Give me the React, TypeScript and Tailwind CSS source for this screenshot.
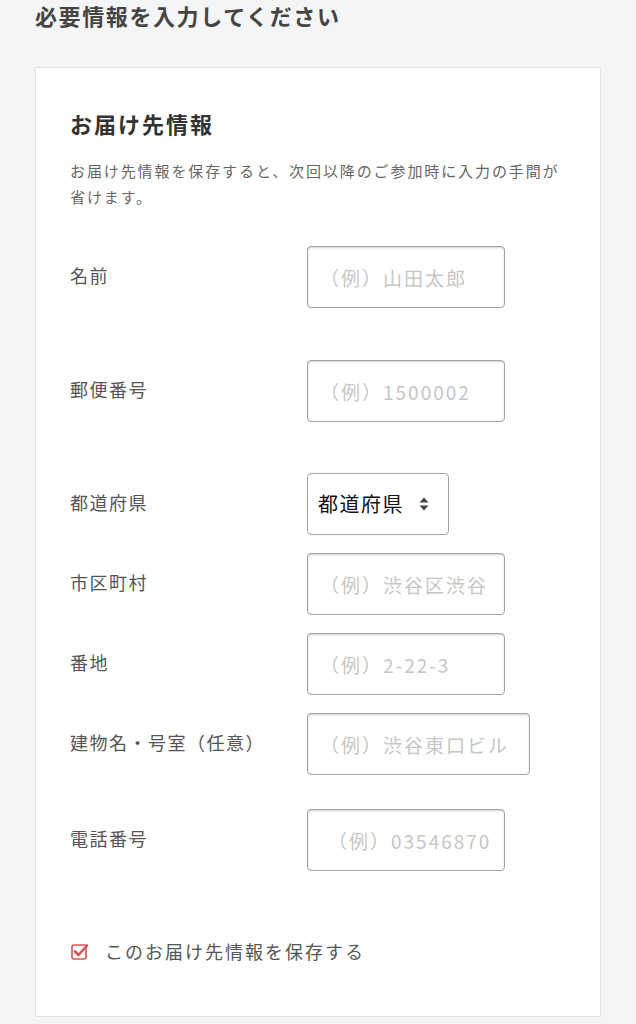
import React from "react";

const font = { fontFamily: '"Noto Sans CJK JP", "Noto Sans", sans-serif' };

type Field = {
  label: string;
  placeholder: string;
  width: string;
  gap: string;
  pad?: string;
};

const fields: Field[] = [
  { label: "名前", placeholder: "（例）山田太郎", width: "w-[198px]", gap: "mt-0" },
  { label: "郵便番号", placeholder: "（例）1500002", width: "w-[198px]", gap: "mt-[52px]" },
];

const fields2: Field[] = [
  { label: "市区町村", placeholder: "（例）渋谷区渋谷", width: "w-[198px]", gap: "mt-[18px]" },
  { label: "番地", placeholder: "（例）2-22-3", width: "w-[198px]", gap: "mt-[18px]" },
  { label: "建物名・号室（任意）", placeholder: "（例）渋谷東口ビル", width: "w-[223px]", gap: "mt-[18px]" },
  { label: "電話番号", placeholder: "（例）0354687000", width: "w-[198px]", gap: "mt-[34px]", pad: "pl-[20px]" },
];

const FieldRow: React.FC<{ field: Field }> = ({ field }) => (
  <div className={`flex items-center ${field.gap}`}>
    <label className="w-[237px] shrink-0 text-[18px] leading-[24px] tracking-[1.5px] text-[#555] -mt-[4px]">
      {field.label}
    </label>
    <input
      type="text"
      placeholder={field.placeholder}
      className={`h-[62px] ${field.width} rounded-[4px] border border-[#a3a3a3] bg-white ${field.pad ?? "pl-[12px]"} pr-[12px] text-[19px] tracking-[2px] text-[#333] placeholder:text-[#c6c6c6] shadow-[inset_0_1px_2px_rgba(0,0,0,0.18)] outline-none`}
      style={font}
    />
  </div>
);

export default function App() {
  return (
    <div className="min-h-[1024px] bg-[#f4f5f7] px-[35px]" style={font}>
      <h1 className="text-[22px] font-bold leading-[30px] tracking-[1.6px] text-[#444]">
        必要情報を入力してください
      </h1>

      <div className="mt-[37px] border border-[#e2e3e5] bg-white px-[34px] pt-[40px] pb-[53px]">
        <h2 className="text-[22px] font-bold leading-[30px] tracking-[2px] text-[#333]">
          お届け先情報
        </h2>
        <p className="mt-[20px] text-[15px] leading-[26px] tracking-[1.9px] text-[#666]">
          お届け先情報を保存すると、次回以降のご参加時に入力の手間が省けます。
        </p>

        <div className="mt-[36px] flex flex-col">
          {fields.map((f) => (
            <FieldRow key={f.label} field={f} />
          ))}

          {/* Prefecture select */}
          <div className="mt-[51px] flex items-center">
            <label className="w-[237px] shrink-0 text-[18px] leading-[24px] tracking-[1.5px] text-[#555] -mt-[4px]">
              都道府県
            </label>
            <div className="relative">
              <select
                className="h-[62px] w-[142px] appearance-none rounded-[4px] border border-[#a3a3a3] bg-white pl-[10px] text-[20px] tracking-[1.5px] text-[#111] outline-none"
                style={font}
                defaultValue=""
              >
                <option value="">都道府県</option>
                <option value="tokyo">東京都</option>
              </select>
              <svg
                className="pointer-events-none absolute left-[112px] top-[24px]"
                width="10"
                height="14"
                viewBox="0 0 10 14"
              >
                <path d="M5 0.5L9.5 5.5H0.5Z" fill="#444" />
                <path d="M5 13.5L9.5 8.5H0.5Z" fill="#444" />
              </svg>
            </div>
          </div>

          {fields2.map((f) => (
            <FieldRow key={f.label} field={f} />
          ))}
        </div>

        <label className="mt-[68px] flex items-center gap-[16px]">
          <svg width="18" height="18" viewBox="0 0 18 18" className="shrink-0 -mt-[1px] ml-[1px]">
            <rect x="1" y="3" width="14" height="14" rx="2" fill="none" stroke="#d9534f" strokeWidth="1.6" />
            <path
              d="M4 9.5L7.5 13L16 3.5"
              fill="none"
              stroke="#d9534f"
              strokeWidth="2.6"
              strokeLinecap="round"
              strokeLinejoin="round"
            />
          </svg>
          <span className="text-[18px] leading-[24px] tracking-[2px] text-[#555]">
            このお届け先情報を保存する
          </span>
        </label>
      </div>
    </div>
  );
}
